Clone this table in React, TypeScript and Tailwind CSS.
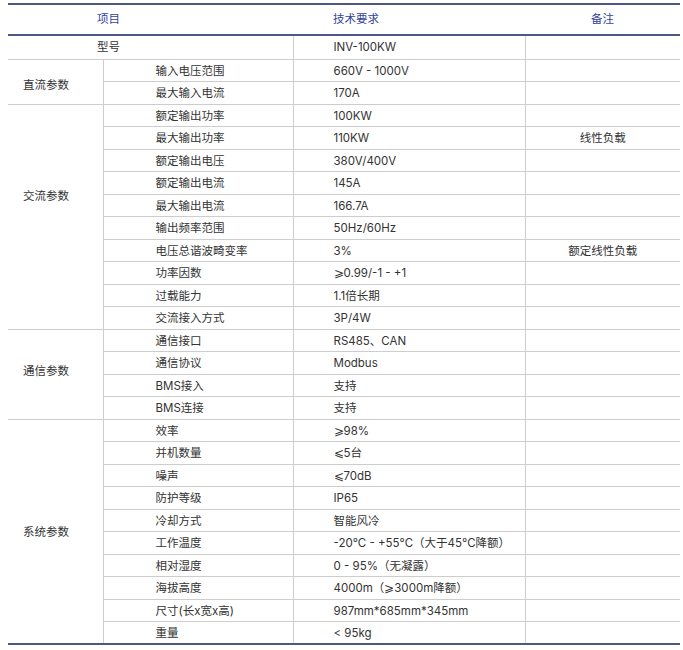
import React from "react";

type Row = { item: string; value: string; note?: string };
type Group = { name: string; cls: string; rows: Row[] };

const groups: Group[] = [
  {
    name: "直流参数",
    cls: "pt-[8px]",
    rows: [
      { item: "输入电压范围", value: "660V - 1000V" },
      { item: "最大输入电流", value: "170A" },
    ],
  },
  {
    name: "交流参数",
    cls: "pb-[40px]",
    rows: [
      { item: "额定输出功率", value: "100KW" },
      { item: "最大输出功率", value: "110KW", note: "线性负载" },
      { item: "额定输出电压", value: "380V/400V" },
      { item: "额定输出电流", value: "145A" },
      { item: "最大输出电流", value: "166.7A" },
      { item: "输出频率范围", value: "50Hz/60Hz" },
      { item: "电压总谐波畸变率", value: "3%", note: "额定线性负载" },
      { item: "功率因数", value: "⩾0.99/-1 - +1" },
      { item: "过载能力", value: "1.1倍长期" },
      { item: "交流接入方式", value: "3P/4W" },
    ],
  },
  {
    name: "通信参数",
    cls: "pb-[4px]",
    rows: [
      { item: "通信接口", value: "RS485、CAN" },
      { item: "通信协议", value: "Modbus" },
      { item: "BMS接入", value: "支持" },
      { item: "BMS连接", value: "支持" },
    ],
  },
  {
    name: "系统参数",
    cls: "pt-[2px]",
    rows: [
      { item: "效率", value: "⩾98%" },
      { item: "并机数量", value: "⩽5台" },
      { item: "噪声", value: "⩽70dB" },
      { item: "防护等级", value: "IP65" },
      { item: "冷却方式", value: "智能风冷" },
      { item: "工作温度", value: "-20°C - +55°C（大于45°C降额）" },
      { item: "相对湿度", value: "0 - 95%（无凝露）" },
      { item: "海拔高度", value: "4000m（⩾3000m降额）" },
      { item: "尺寸(长x宽x高)", value: "987mm*685mm*345mm" },
      { item: "重量", value: "< 95kg" },
    ],
  },
];

export default function App() {
  return (
    <div
      className="w-[683px] h-[650px] bg-white pt-[3px] text-[11.5px] text-[#333333]"
      style={{ fontFamily: 'Inter, "Noto Sans CJK SC", sans-serif' }}
    >
      <table className="ml-[8px] w-[672px] table-fixed border-collapse border-t-2 border-b-2 border-[#4b5785]">
        <colgroup>
          <col className="w-[95px]" />
          <col className="w-[190px]" />
          <col className="w-[232px]" />
          <col className="w-[155px]" />
        </colgroup>
        <thead>
          <tr className="h-[31px]">
            <th
              colSpan={2}
              className="border-b-2 border-[#4b5785] pl-[89px] text-left font-normal text-[#33449a]"
            >
              项目
            </th>
            <th className="border-b-2 border-[#4b5785] pl-[40px] text-left font-normal text-[#33449a]">
              技术要求
            </th>
            <th className="border-b-2 border-[#4b5785] text-center font-normal text-[#33449a]">
              备注
            </th>
          </tr>
        </thead>
        <tbody>
          <tr className="h-[24px]">
            <td colSpan={2} className="border-b border-[#cdcdcd] pl-[89px] pt-[1px]">
              型号
            </td>
            <td className="border-b border-l border-[#cdcdcd] pl-[40px] pt-[1px]">
              INV-100KW
            </td>
            <td className="border-b border-l border-[#cdcdcd]"></td>
          </tr>
          {groups.map((g) =>
            g.rows.map((r, i) => (
              <tr key={g.name + i} className="h-[22.5px]">
                {i === 0 && (
                  <td
                    rowSpan={g.rows.length}
                    className={`border-b border-[#cdcdcd] pl-[15px] ${g.cls}`}
                  >
                    {g.name}
                  </td>
                )}
                <td className="border-b border-l border-[#cdcdcd] pl-[52px] pt-[2px] leading-none">
                  {r.item}
                </td>
                <td className="border-b border-l border-[#cdcdcd] pl-[40px] pt-[2px] leading-none">
                  {r.value}
                </td>
                <td className="border-b border-l border-[#cdcdcd] pt-[2px] text-center leading-none">
                  {r.note ?? ""}
                </td>
              </tr>
            ))
          )}
        </tbody>
      </table>
    </div>
  );
}
